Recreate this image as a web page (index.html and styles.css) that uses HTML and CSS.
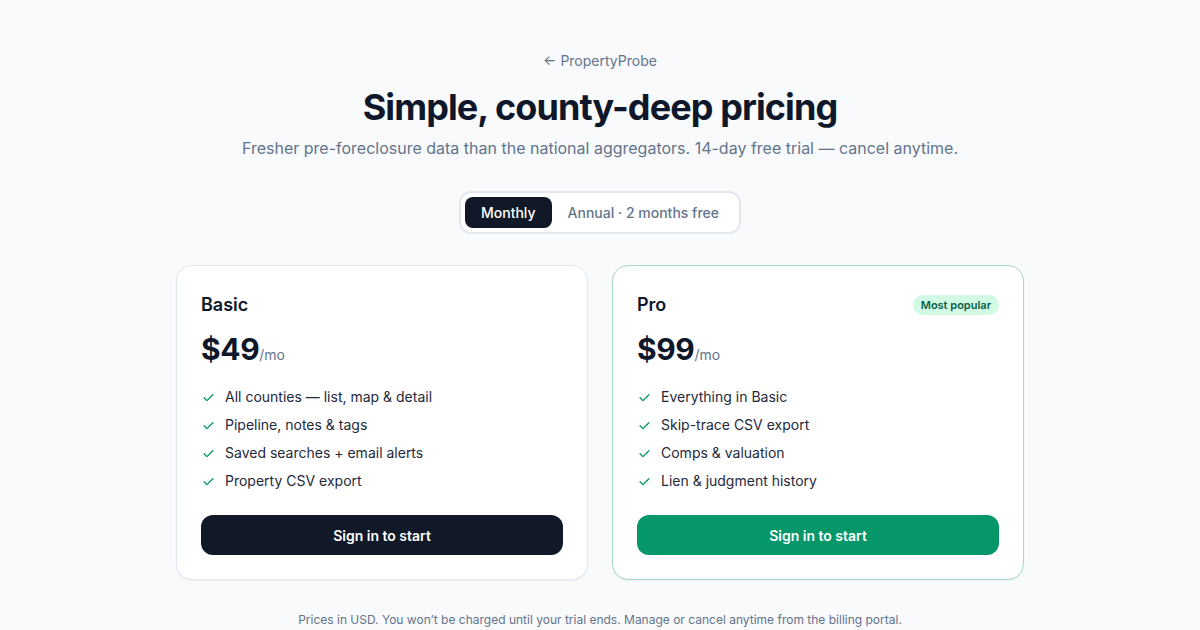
FILE: index.html
```html
<!DOCTYPE html>
<html lang="en">
<head>
    <meta charset="UTF-8">
    <meta name="viewport" content="width=device-width, initial-scale=1.0">
    <title>Pricing - PropertyProbe</title>
    <link rel="stylesheet" href="styles.css">
</head>
<body>
    <main class="page">
        <a class="back" href="#">← PropertyProbe</a>
        <h1 class="title">Simple, county-deep pricing</h1>
        <p class="lead">Fresher pre-foreclosure data than the national aggregators. 14-day free trial — cancel anytime.</p>

        <div class="toggle">
            <button class="toggle-btn active">Monthly</button>
            <button class="toggle-btn">Annual · 2 months free</button>
        </div>

        <div class="plans">
            <div class="plan">
                <div class="plan-head">
                    <h2 class="plan-name">Basic</h2>
                </div>
                <div class="price"><span class="amount">$49</span><span class="per">/mo</span></div>
                <ul class="features">
                    <li><svg class="check" viewBox="0 0 24 24"><path d="M5 12.5l4.5 4.5L19 7.5"/></svg>All counties — list, map &amp; detail</li>
                    <li><svg class="check" viewBox="0 0 24 24"><path d="M5 12.5l4.5 4.5L19 7.5"/></svg>Pipeline, notes &amp; tags</li>
                    <li><svg class="check" viewBox="0 0 24 24"><path d="M5 12.5l4.5 4.5L19 7.5"/></svg>Saved searches + email alerts</li>
                    <li><svg class="check" viewBox="0 0 24 24"><path d="M5 12.5l4.5 4.5L19 7.5"/></svg>Property CSV export</li>
                </ul>
                <button class="cta">Sign in to start</button>
            </div>

            <div class="plan plan-pro">
                <div class="plan-head">
                    <h2 class="plan-name">Pro</h2>
                    <span class="badge">Most popular</span>
                </div>
                <div class="price"><span class="amount">$99</span><span class="per">/mo</span></div>
                <ul class="features">
                    <li><svg class="check" viewBox="0 0 24 24"><path d="M5 12.5l4.5 4.5L19 7.5"/></svg>Everything in Basic</li>
                    <li><svg class="check" viewBox="0 0 24 24"><path d="M5 12.5l4.5 4.5L19 7.5"/></svg>Skip-trace CSV export</li>
                    <li><svg class="check" viewBox="0 0 24 24"><path d="M5 12.5l4.5 4.5L19 7.5"/></svg>Comps &amp; valuation</li>
                    <li><svg class="check" viewBox="0 0 24 24"><path d="M5 12.5l4.5 4.5L19 7.5"/></svg>Lien &amp; judgment history</li>
                </ul>
                <button class="cta cta-green">Sign in to start</button>
            </div>
        </div>

        <p class="note">Prices in USD. You won’t be charged until your trial ends. Manage or cancel anytime from the billing portal.</p>
    </main>
</body>
</html>
```

FILE: styles.css
```css
body {
    margin: 0;
    background-color: #f8fafc;
    font-family: Inter, "Noto Sans", sans-serif;
    color: #0f172a;
}

.page {
    display: flex;
    flex-direction: column;
    align-items: center;
    padding-top: 51px;
}

.back {
    font-size: 14px;
    line-height: 20px;
    color: #64748b;
    text-decoration: none;
}

.title {
    margin: 16px 0 0;
    font-size: 36px;
    line-height: 40px;
    font-weight: 700;
    letter-spacing: -0.9px;
    color: #0f172a;
}

.lead {
    margin: 9px 0 0;
    font-size: 16px;
    line-height: 24px;
    color: #64748b;
}

.toggle {
    display: flex;
    margin-top: 31px;
    padding: 4px;
    background: #fff;
    border: 2px solid #e2e8f0;
    border-radius: 12px;
}

.toggle-btn {
    border: none;
    background: none;
    font-family: inherit;
    font-size: 14px;
    font-weight: 500;
    color: #64748b;
    padding: 6px 16px;
    line-height: 19px;
    border-radius: 8px;
    cursor: pointer;
}

.toggle-btn.active {
    background: #111827;
    color: #fff;
}

.plans {
    display: grid;
    grid-template-columns: 412px 412px;
    gap: 24px;
    margin-top: 31px;
}

.plan {
    background: #fff;
    border: 1px solid #e2e8f0;
    border-radius: 16px;
    padding: 25px 24px 24px;
    box-shadow: 0 1px 2px rgba(15, 23, 42, 0.05);
}

.plan-pro {
    border-color: #a7d7c5;
}

.plan-head {
    display: flex;
    justify-content: space-between;
    align-items: center;
    height: 28px;
}

.plan-name {
    margin: 0;
    font-size: 18px;
    font-weight: 600;
    line-height: 28px;
}

.badge {
    background: #d1fae5;
    color: #065f46;
    font-size: 11px;
    font-weight: 600;
    line-height: 20px;
    padding: 0 8px;
    border-radius: 999px;
}

.price {
    margin-top: 12px;
    display: flex;
    align-items: baseline;
}

.amount {
    font-size: 30px;
    font-weight: 700;
    line-height: 36px;
    letter-spacing: -0.4px;
}

.per {
    font-size: 14px;
    color: #64748b;
}

.features {
    list-style: none;
    margin: 20px 0 0;
    padding: 0;
    display: flex;
    flex-direction: column;
    gap: 8px;
}

.features li {
    display: flex;
    align-items: center;
    gap: 9px;
    font-size: 14px;
    line-height: 20px;
    color: #1e293b;
}

.check {
    width: 15px;
    height: 15px;
    fill: none;
    stroke: #059669;
    stroke-width: 2.2;
    stroke-linecap: round;
    stroke-linejoin: round;
}

.cta {
    display: block;
    width: 100%;
    margin-top: 24px;
    height: 40px;
    border: none;
    border-radius: 12px;
    background: #111827;
    color: #fff;
    font-family: inherit;
    font-size: 14px;
    font-weight: 600;
    cursor: pointer;
}

.cta-green {
    background: #059669;
}

.note {
    margin: 32px 0 0;
    font-size: 12px;
    line-height: 16px;
    color: #64748b;
}
```
